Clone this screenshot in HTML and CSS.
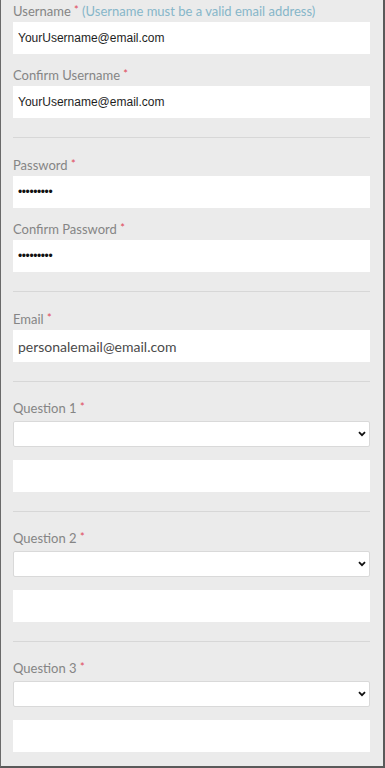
FILE: index.html
```html
<!DOCTYPE html>
<html lang="en">
<head>
<meta charset="utf-8">
<title>Account form</title>
<link rel="stylesheet" href="styles.css">
</head>
<body>
<form class="panel">
  <section class="section first">
    <div class="field">
      <label class="label">Username <span class="req">*</span> <span class="hint">(Username must be a valid email address)</span></label>
      <input class="input" type="text" value="YourUsername@email.com">
    </div>
    <div class="field">
      <label class="label">Confirm Username <span class="req">*</span></label>
      <input class="input" type="text" value="YourUsername@email.com">
    </div>
  </section>
  <section class="section">
    <div class="field">
      <label class="label">Password <span class="req">*</span></label>
      <input class="input pw" type="password" value="123456789">
    </div>
    <div class="field">
      <label class="label">Confirm Password <span class="req">*</span></label>
      <input class="input pw" type="password" value="123456789">
    </div>
  </section>
  <section class="section">
    <div class="field">
      <label class="label">Email <span class="req">*</span></label>
      <input class="input email" type="text" value="personalemail@email.com">
    </div>
  </section>
  <section class="section q">
    <label class="label">Question 1 <span class="req">*</span></label>
    <div class="select-wrap">
      <select class="select"><option></option></select>
      <svg class="chev" width="8" height="6" viewBox="0 0 8 6"><path d="M1 1.2 L4 4.2 L7 1.2" fill="none" stroke="#111" stroke-width="1.8"/></svg>
    </div>
    <input class="input answer" type="text">
  </section>
  <section class="section q">
    <label class="label">Question 2 <span class="req">*</span></label>
    <div class="select-wrap">
      <select class="select"><option></option></select>
      <svg class="chev" width="8" height="6" viewBox="0 0 8 6"><path d="M1 1.2 L4 4.2 L7 1.2" fill="none" stroke="#111" stroke-width="1.8"/></svg>
    </div>
    <input class="input answer" type="text">
  </section>
  <section class="section q last">
    <label class="label">Question 3 <span class="req">*</span></label>
    <div class="select-wrap">
      <select class="select"><option></option></select>
      <svg class="chev" width="8" height="6" viewBox="0 0 8 6"><path d="M1 1.2 L4 4.2 L7 1.2" fill="none" stroke="#111" stroke-width="1.8"/></svg>
    </div>
    <input class="input answer" type="text">
  </section>
</form>
</body>
</html>
```
FILE: styles.css
```css
html, body {
  margin: 0;
  padding: 0;
  background: #ebebeb;
}
.panel {
  box-sizing: border-box;
  width: 385px;
  height: 768px;
  overflow: hidden;
  background: #ebebeb;
  border-left: 1px solid #6a6a6a;
  border-right: 2px solid #5a5a5a;
  border-bottom: 2px solid #5a5a5a;
  padding: 0 13px 0 12px;
  font-family: Lato, "Open Sans", sans-serif;
}
.section {
  padding: 18px 0 19px;
  border-bottom: 1px solid #d7d7d7;
}
.section.first {
  padding-top: 2px;
}
.section.last {
  border-bottom: none;
}
.field {
  display: flex;
  flex-direction: column;
}
.field + .field {
  margin-top: 12px;
}
.label {
  display: block;
  height: 18px;
  font-size: 13px;
  line-height: 18px;
  color: #858585;
  margin-bottom: 2px;
  white-space: nowrap;
}
.req {
  color: #e0485a;
  font-size: 11px;
  line-height: 0;
  vertical-align: 2px;
}
.hint {
  color: #86b6c9;
}
.input {
  display: block;
  box-sizing: border-box;
  width: 100%;
  height: 32px;
  margin: 0;
  border: none;
  outline: none;
  background: #fff;
  padding: 0 5px;
  font-family: "Liberation Sans", Arial, sans-serif;
  font-size: 12px;
  color: #1e1e1e;
}
.input.pw {
  font-size: 12px;
  color: #111;
  letter-spacing: -0.4px;
}
.input.email {
  font-family: Lato, "Open Sans", sans-serif;
  font-size: 14px;
  color: #4a4a4a;
}
.q {
  padding-top: 17px;
}
.q .label {
  margin-bottom: 4px;
}
.select-wrap {
  position: relative;
}
.select {
  display: block;
  box-sizing: border-box;
  width: 100%;
  height: 26px;
  margin: 0;
  border: 1px solid #d9d9d9;
  border-radius: 2px;
  background: #fff;
  -webkit-appearance: none;
  appearance: none;
  outline: none;
}
.chev {
  position: absolute;
  right: 4px;
  top: 10px;
}
.answer {
  margin-top: 13px;
}
```
